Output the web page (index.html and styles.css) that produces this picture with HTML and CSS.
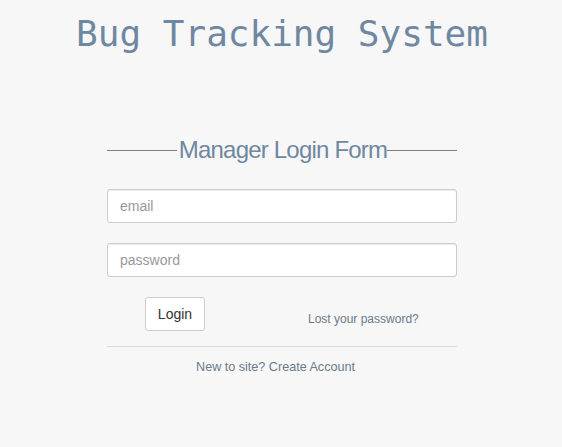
FILE: index.html
```html
<!DOCTYPE html>
<html>
<head>
<meta charset="utf-8">
<link rel="stylesheet" href="styles.css">
</head>
<body>
<h1 class="title">Bug Tracking System</h1>
<div class="login">
  <div class="legend"><span class="legend-line"></span><span class="legend-text">Manager Login Form</span><span class="legend-line"></span></div>
  <div class="field"><input class="input" type="text" placeholder="email"></div>
  <div class="field"><input class="input" type="password" placeholder="password"></div>
  <div class="actions">
    <button class="btn">Login</button>
    <a class="lost" href="#">Lost your password?</a>
  </div>
  <div class="divider"></div>
  <div class="signup">New to site? <a class="signup-link" href="#">Create Account</a></div>
</div>
</body>
</html>
```
FILE: styles.css
```css
html, body {
  margin: 0;
  padding: 0;
  background: #f7f7f7;
  font-family: "Liberation Sans", Arial, sans-serif;
}
.title {
  margin: 0;
  padding-top: 14px;
  padding-left: 2px;
  text-align: center;
  font-family: "DejaVu Sans Mono", monospace;
  font-weight: normal;
  font-size: 36px;
  line-height: 40px;
  color: #6f87a0;
}
.login {
  width: 350px;
  margin: 82px 0 0 calc(50% - 174px);
}
.legend {
  display: flex;
  align-items: center;
  height: 28px;
}
.legend-line {
  flex: 1;
  height: 1px;
  background: #808080;
}
.legend-text {
  font-size: 24px;
  color: #6f87a0;
  letter-spacing: -0.8px;
  padding-left: 2px;
}
.field {
  margin-top: 25px;
}
.field + .field {
  margin-top: 20px;
}
.input {
  display: block;
  box-sizing: border-box;
  width: 100%;
  height: 34px;
  padding: 6px 12px;
  border: 1px solid #ccc;
  border-radius: 3px;
  background: #fff;
  font-family: "Liberation Sans", Arial, sans-serif;
  font-size: 14px;
  color: #555;
  box-shadow: inset 0 1px 1px rgba(0,0,0,0.075);
}
.input::placeholder {
  color: #999;
}
.actions {
  display: flex;
  align-items: flex-end;
  margin-top: 20px;
  padding-left: 38px;
}
.btn {
  box-sizing: border-box;
  width: 60px;
  height: 34px;
  padding: 0;
  border: 1px solid #ccc;
  border-radius: 3px;
  background: #fff;
  font-family: "Liberation Sans", Arial, sans-serif;
  font-size: 14px;
  color: #333;
}
.lost {
  margin-left: 103px;
  margin-bottom: 5px;
  font-size: 12px;
  color: #6c7a8a;
  text-decoration: none;
}
.divider {
  margin-top: 15px;
  height: 1px;
  background: #ddd;
}
.signup {
  margin-top: 13px;
  text-align: center;
  padding-right: 13px;
  font-size: 12.6px;
  color: #6c7a8a;
}
.signup-link {
  color: #6c7a8a;
  text-decoration: none;
}
```
